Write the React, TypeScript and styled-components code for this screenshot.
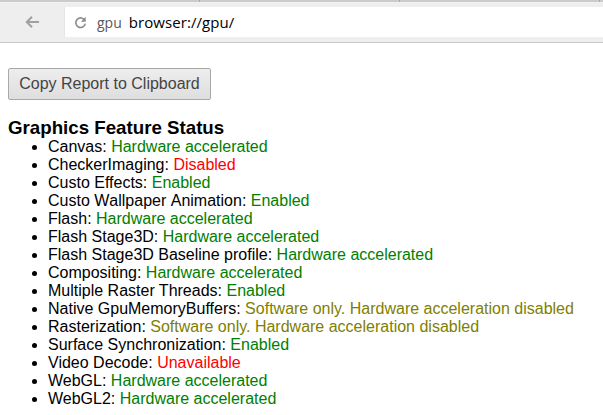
import React from "react";
import styled, { createGlobalStyle } from "styled-components";

type Status = "ok" | "off" | "warn";

const features: { name: string; value: string; status: Status; unkerned?: boolean }[] = [
  { name: "Canvas", value: "Hardware accelerated", status: "ok" },
  { name: "CheckerImaging", value: "Disabled", status: "off" },
  { name: "Custo Effects", value: "Enabled", status: "ok" },
  { name: "Custo Wallpaper Animation", value: "Enabled", status: "ok", unkerned: true },
  { name: "Flash", value: "Hardware accelerated", status: "ok" },
  { name: "Flash Stage3D", value: "Hardware accelerated", status: "ok" },
  { name: "Flash Stage3D Baseline profile", value: "Hardware accelerated", status: "ok" },
  { name: "Compositing", value: "Hardware accelerated", status: "ok" },
  { name: "Multiple Raster Threads", value: "Enabled", status: "ok" },
  { name: "Native GpuMemoryBuffers", value: "Software only. Hardware acceleration disabled", status: "warn" },
  { name: "Rasterization", value: "Software only. Hardware acceleration disabled", status: "warn" },
  { name: "Surface Synchronization", value: "Enabled", status: "ok" },
  { name: "Video Decode", value: "Unavailable", status: "off" },
  { name: "WebGL", value: "Hardware accelerated", status: "ok" },
  { name: "WebGL2", value: "Hardware accelerated", status: "ok" },
];

const statusColors: Record<Status, string> = {
  ok: "#008000",
  off: "#ff0000",
  warn: "#808000",
};

export default function App() {
  return (
    <Page>
      <GlobalStyle />
      <TabStrip />
      <Toolbar>
        <BackIcon viewBox="0 0 16 16">
          <path d="M15 8H3M8 2.8 2.8 8 8 13.2" fill="none" stroke="#a0a0a0" strokeWidth="2" />
        </BackIcon>
        <Omnibox>
          <ReloadIcon viewBox="0 0 12 12">
            <path d="M10 4.2A4.4 4.4 0 1 0 10.4 7" fill="none" stroke="#8c8c8c" strokeWidth="1.5" />
            <path d="M10.8 .8V5.2H6.4Z" fill="#8c8c8c" />
          </ReloadIcon>
          <Keyword>gpu</Keyword>
          <Address>browser://gpu/</Address>
        </Omnibox>
      </Toolbar>
      <Content>
        <CopyButton>Copy Report to Clipboard</CopyButton>
        <Heading>Graphics Feature Status</Heading>
        <FeatureList>
          {features.map((f) => (
            <FeatureRow key={f.name} $unkerned={f.unkerned}>
              {f.name}: <StatusText $status={f.status}>{f.value}</StatusText>
            </FeatureRow>
          ))}
        </FeatureList>
      </Content>
    </Page>
  );
}

const GlobalStyle = createGlobalStyle`
  html, body {
    margin: 0;
    padding: 0;
    background: #ffffff;
    overflow: hidden;
  }
`;

const Page = styled.div`
  width: 603px;
  height: 415px;
  overflow: hidden;
  font-family: "Liberation Sans", Arial, sans-serif;
  font-size: 16px;
  color: #000000;
`;

// the bottom edge of the tab row, with the separators between tabs
const TabStrip = styled.div`
  height: 2px;
  background: repeating-linear-gradient(
    to right,
    #cbcbcb 0,
    #cbcbcb 199px,
    #a8a8a8 199px,
    #a8a8a8 200px
  );
`;

const Toolbar = styled.div`
  height: 41px;
  box-sizing: border-box;
  display: flex;
  align-items: center;
  padding: 4px 0 5px 24px;
  background: #eeeeee;
  border-top: 1px solid #f2f2f2;
  border-bottom: 1px solid #c9c9c9;
`;

const BackIcon = styled.svg`
  width: 16px;
  height: 16px;
  margin-right: 24px;
`;

const Omnibox = styled.div`
  flex: 1;
  height: 30px;
  box-sizing: border-box;
  display: flex;
  align-items: center;
  padding-left: 9px;
  background: #ffffff;
  border-left: 1px solid #e6e6e6;
`;

const ReloadIcon = styled.svg`
  width: 13px;
  height: 13px;
  margin-right: 10px;
`;

const Keyword = styled.span`
  font-family: "Open Sans", "Liberation Sans", sans-serif;
  font-size: 14px;
  color: #5a5a5a;
  margin-right: 7px;
`;

const Address = styled.span`
  font-family: "Open Sans", "Liberation Sans", sans-serif;
  font-size: 15px;
  letter-spacing: 0.07px;
  color: #000000;
`;

const Content = styled.div`
  padding: 25px 8px 0;
`;

const CopyButton = styled.button`
  display: block;
  width: 203px;
  height: 32px;
  padding: 0;
  font-family: "Liberation Sans", Arial, sans-serif;
  font-size: 16px;
  color: #444444;
  background: linear-gradient(#ededed, #dedede);
  border: 1px solid #a9a9a9;
  border-radius: 2px;
`;

const Heading = styled.div`
  margin-top: 18px;
  font-size: 18.72px;
  line-height: 20px;
  font-weight: 700;
`;

const FeatureList = styled.ul`
  margin: 0;
  padding-left: 40px;
  line-height: 18px;
`;

const FeatureRow = styled.li<{ $unkerned?: boolean }>`
  font-kerning: ${(p) => (p.$unkerned ? "none" : "auto")};
`;

const StatusText = styled.span<{ $status: Status }>`
  color: ${(p) => statusColors[p.$status]};
`;
